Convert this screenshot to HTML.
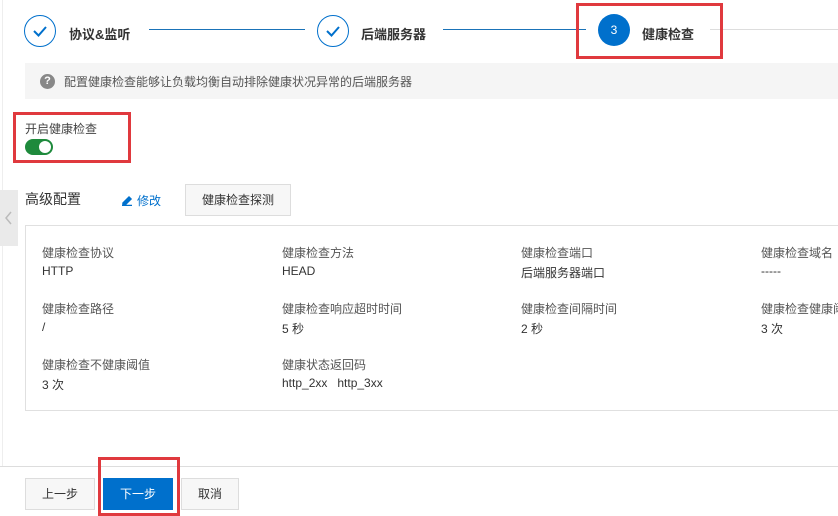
<!DOCTYPE html>
<html><head><meta charset="utf-8"><style>
*{margin:0;padding:0;box-sizing:border-box}
body{width:838px;height:516px;overflow:hidden;background:#fff;position:relative;font-family:"Liberation Sans","Noto Sans CJK SC",sans-serif;color:#333;font-size:12px}
.a{position:absolute;white-space:nowrap}
.circ{position:absolute;width:32px;height:32px;border-radius:50%;border:1.5px solid #0070cc}
.st{font-size:13px;font-weight:bold;color:#333}
.lbl{color:#555;font-size:12px}
.val{color:#333;font-size:12px}
.btn{position:absolute;border:1px solid #ddd;background:#f7f7f7;text-align:center;font-size:12px;color:#333}
.red{position:absolute;border:3px solid #e0393e}
</style></head><body>
<div class="a" style="left:2px;top:0;width:1px;height:466px;background:#eee"></div>
<div class="a" style="left:0;top:190px;width:18px;height:56px;background:#eaeaea"></div>
<svg class="a" style="left:4px;top:211px" width="10" height="14"><path d="M7 1 L2 7 L7 13" stroke="#bbb" stroke-width="1.5" fill="none"/></svg>

<div class="circ" style="left:24px;top:15px"></div>
<svg class="a" style="left:24px;top:15px" width="32" height="32"><path d="M10 16 L14.5 20.5 L22 12" stroke="#0070cc" stroke-width="2" fill="none"/></svg>
<div class="a st" style="left:69px;top:24px">协议&amp;监听</div>
<div class="a" style="left:149px;top:29px;width:156px;height:1px;background:#1a73b8"></div>
<div class="circ" style="left:317px;top:15px"></div>
<svg class="a" style="left:317px;top:15px" width="32" height="32"><path d="M10 16 L14.5 20.5 L22 12" stroke="#0070cc" stroke-width="2" fill="none"/></svg>
<div class="a st" style="left:361px;top:24px">后端服务器</div>
<div class="a" style="left:443px;top:29px;width:143px;height:1px;background:#1a73b8"></div>
<div class="a" style="left:598px;top:14px;width:32px;height:32px;border-radius:50%;background:#0070cc;color:#fff;text-align:center;line-height:32px;font-size:12px">3</div>
<div class="a st" style="left:642px;top:24px">健康检查</div>
<div class="a" style="left:710px;top:29px;width:128px;height:1px;background:#ddd"></div>
<div class="red" style="left:576px;top:3px;width:147px;height:56px"></div>

<div class="a" style="left:25px;top:63px;width:813px;height:36px;background:#f5f5f5"></div>
<div class="a" style="left:40px;top:74px;width:15px;height:15px;border-radius:50%;background:#888;color:#fff;font-size:11px;font-weight:bold;text-align:center;line-height:15px">?</div>
<div class="a" style="left:64px;top:73px;color:#555">配置健康检查能够让负载均衡自动排除健康状况异常的后端服务器</div>

<div class="red" style="left:13px;top:112px;width:118px;height:51px"></div>
<div class="a lbl" style="left:25px;top:120px;color:#444">开启健康检查</div>
<div class="a" style="left:25px;top:139px;width:28px;height:16px;border-radius:8px;background:#1e8a3c"></div>
<div class="a" style="left:39px;top:141px;width:12px;height:12px;border-radius:50%;background:#fff"></div>

<div class="a" style="left:25px;top:189px;font-size:14px;color:#333">高级配置</div>
<svg class="a" style="left:121px;top:194px" width="12" height="12"><path d="M2 9 L8 3 L10 5 L4 11 L2 11Z M1 11.5 H11" stroke="#0070cc" stroke-width="1.5" fill="#0070cc"/></svg>
<div class="a" style="left:137px;top:192px;color:#0070cc">修改</div>
<div class="btn" style="left:185px;top:184px;width:106px;height:32px;line-height:30px">健康检查探测</div>

<div class="a" style="left:25px;top:225px;width:820px;height:186px;border:1px solid #e0e0e0"></div>
<div class="a lbl" style="left:42px;top:244px">健康检查协议</div><div class="a val" style="left:42px;top:264px">HTTP</div>
<div class="a lbl" style="left:282px;top:244px">健康检查方法</div><div class="a val" style="left:282px;top:264px">HEAD</div>
<div class="a lbl" style="left:521px;top:244px">健康检查端口</div><div class="a val" style="left:521px;top:264px">后端服务器端口</div>
<div class="a lbl" style="left:761px;top:244px">健康检查域名</div><div class="a val" style="left:761px;top:264px">-----</div>
<div class="a lbl" style="left:42px;top:300px">健康检查路径</div><div class="a val" style="left:42px;top:320px">/</div>
<div class="a lbl" style="left:282px;top:300px">健康检查响应超时时间</div><div class="a val" style="left:282px;top:320px">5 秒</div>
<div class="a lbl" style="left:521px;top:300px">健康检查间隔时间</div><div class="a val" style="left:521px;top:320px">2 秒</div>
<div class="a lbl" style="left:761px;top:300px">健康检查健康阈值</div><div class="a val" style="left:761px;top:320px">3 次</div>
<div class="a lbl" style="left:42px;top:356px">健康检查不健康阈值</div><div class="a val" style="left:42px;top:376px">3 次</div>
<div class="a lbl" style="left:282px;top:356px">健康状态返回码</div><div class="a val" style="left:282px;top:376px">http_2xx&nbsp;&nbsp;&nbsp;http_3xx</div>

<div class="a" style="left:0;top:466px;width:838px;height:1px;background:#ddd"></div>
<div class="btn" style="left:25px;top:478px;width:70px;height:32px;line-height:30px">上一步</div>
<div class="btn" style="left:103px;top:478px;width:70px;height:32px;line-height:32px;background:#0070cc;border:none;color:#fff">下一步</div>
<div class="btn" style="left:181px;top:478px;width:58px;height:32px;line-height:30px">取消</div>
<div class="red" style="left:98px;top:457px;width:82px;height:59px"></div>
</body></html>
